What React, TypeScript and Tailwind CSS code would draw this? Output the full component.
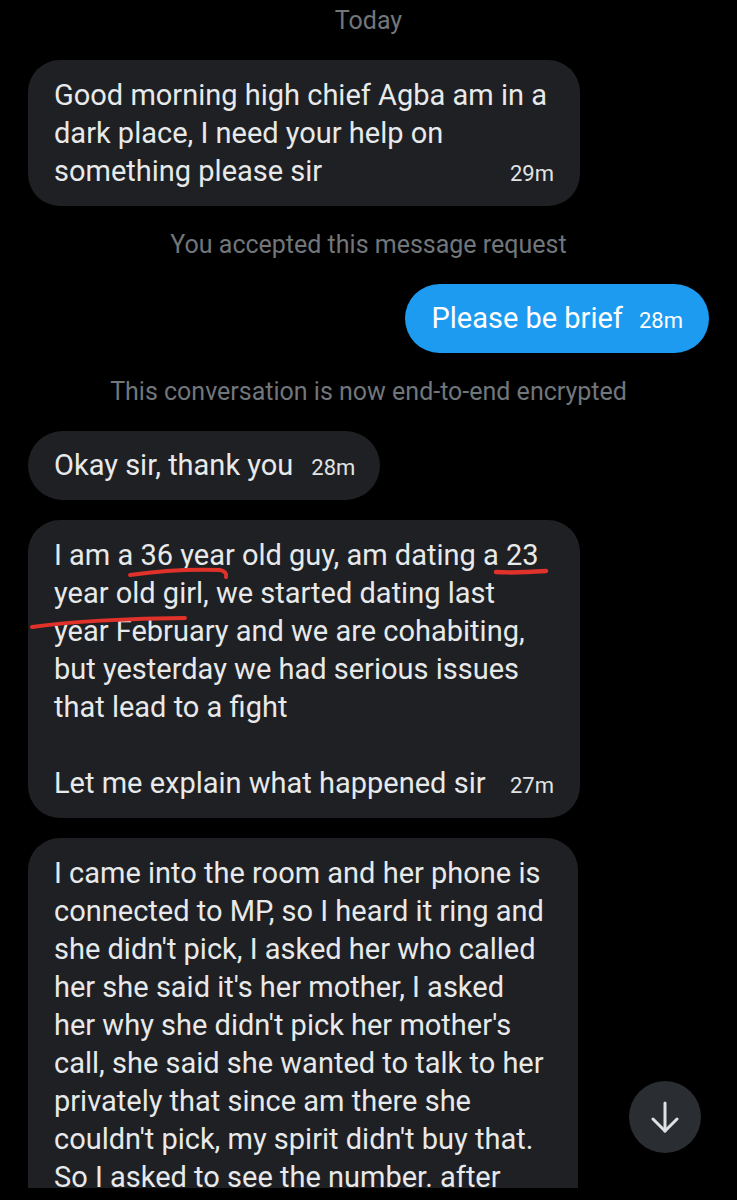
import React from "react";

const font = { fontFamily: "Roboto, 'Noto Sans', sans-serif" };

type Line = string;

const Stamp = ({ t }: { t: string }) => (
    <span className="ml-4 text-[22px] leading-[38px] text-[#e1e3e4] whitespace-nowrap">{t}</span>
);

const Bubble = ({ lines, time, className = "" }: { lines: Line[]; time?: string; className?: string }) => (
    <div className={`self-start rounded-[32px] bg-[#1f2023] px-[26px] py-[16px] text-[29px] leading-[38px] text-[#e7e9ea] ${className}`}>
        {lines.map((l, i) => {
            const last = i === lines.length - 1;
            if (last && time) {
                return (
                    <div key={i} className="flex justify-between items-baseline whitespace-nowrap h-[38px] overflow-visible">
                        <span>{l}</span>
                        <Stamp t={time} />
                    </div>
                );
            }
            return (
                <div key={i} className="whitespace-nowrap h-[38px]">
                    {l}
                </div>
            );
        })}
    </div>
);

const SysText = ({ children, className = "" }: { children: React.ReactNode; className?: string }) => (
    <div className={`text-center text-[25px] leading-[30px] h-[30px] text-[#71767b] ${className}`}>{children}</div>
);

export default function App() {
    return (
        <div className="relative w-[737px] h-[1200px] bg-black overflow-hidden" style={font}>
            <div className="h-[1188px] overflow-hidden flex flex-col px-[28px] pt-[6px]">
                <SysText>Today</SysText>

                <Bubble
                    className="mt-[24px] w-[552px]"
                    lines={[
                        "Good morning high chief Agba am in a",
                        "dark place, I need your help on",
                        "something please sir",
                    ]}
                    time="29m"
                />

                <SysText className="mt-[24px]">You accepted this message request</SysText>

                <div className="mt-[24px] self-end flex items-baseline rounded-[35px] bg-[#1d9bf0] px-[26px] h-[69px] text-white">
                    <span className="text-[29px] leading-[69px]">Please be brief</span>
                    <span className="ml-4 text-[22px]">28m</span>
                </div>

                <SysText className="mt-[24px]">This conversation is now end-to-end encrypted</SysText>

                <div className="mt-[24px] self-start flex items-baseline rounded-[35px] bg-[#1f2023] pl-[26px] pr-[25px] h-[69px] text-[#e7e9ea]">
                    <span className="text-[29px] leading-[69px]">Okay sir, thank you</span>
                    <span className="ml-[18px] text-[22px] text-[#e1e3e4]">28m</span>
                </div>

                <div className="relative mt-[20px] self-start">
                    <Bubble
                        className="w-[552px]"
                        lines={[
                            "I am a 36 year old guy, am dating a 23",
                            "year old girl, we started dating last",
                            "year February and we are cohabiting,",
                            "but yesterday we had serious issues",
                            "that lead to a fight",
                            "",
                            "Let me explain what happened sir",
                        ]}
                        time="27m"
                    />
                    <svg className="absolute left-0 top-0 pointer-events-none" width="560" height="140" viewBox="0 0 560 140" fill="none">
                        <path d="M102 55 C 130 51, 165 49, 192 50 C 197 51, 199 54, 198 57" stroke="#e0312b" strokeWidth="4" strokeLinecap="round" />
                        <path d="M468 52 C 485 53, 503 52, 518 51" stroke="#e0312b" strokeWidth="4.5" strokeLinecap="round" />
                        <path d="M4 107 C 40 102, 100 98, 157 98" stroke="#e0312b" strokeWidth="4" strokeLinecap="round" />
                    </svg>
                </div>

                <Bubble
                    className="mt-[20px] w-[550px] rounded-b-none"
                    lines={[
                        "I came into the room and her phone is",
                        "connected to MP, so I heard it ring and",
                        "she didn't pick, I asked her who called",
                        "her she said it's her mother, I asked",
                        "her why she didn't pick her mother's",
                        "call, she said she wanted to talk to her",
                        "privately that since am there she",
                        "couldn't pick, my spirit didn't buy that.",
                        "So I asked to see the number. after",
                    ]}
                />
            </div>

            <div className="absolute left-[629px] top-[1081px] w-[72px] h-[72px] rounded-full bg-[#2a2d31] flex items-center justify-center">
                <svg width="30" height="32" viewBox="0 0 30 32" fill="none" stroke="#dfe1e3" strokeWidth="3" strokeLinecap="round" strokeLinejoin="round">
                    <path d="M15 2 V30" />
                    <path d="M3 18 L15 30 L27 18" />
                </svg>
            </div>
        </div>
    );
}
